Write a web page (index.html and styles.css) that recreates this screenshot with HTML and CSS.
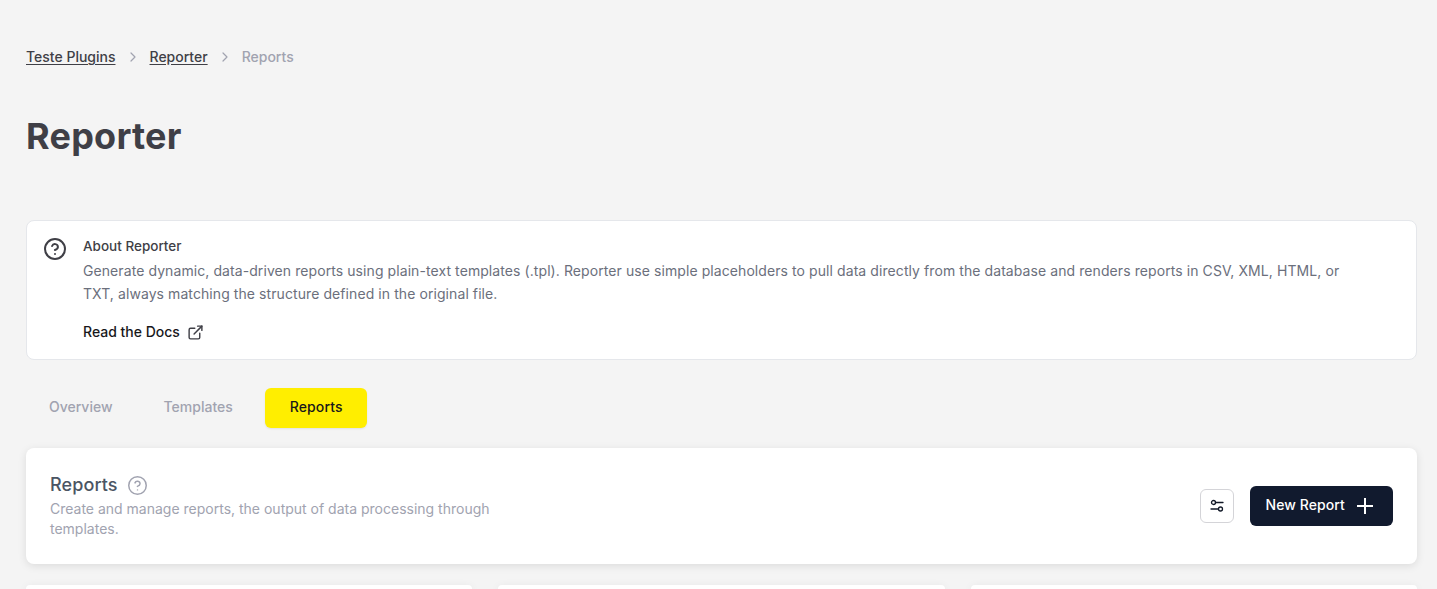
FILE: index.html
```html
<!DOCTYPE html>
<html lang="en">

<head>
  <meta charset="utf-8">
  <title>Reporter</title>
  <link rel="stylesheet" href="styles.css">
</head>

<body>
  <div class="page">
    <nav class="breadcrumb">
      <a href="#" class="crumb-link">Teste Plugins</a>
      <svg class="crumb-sep" viewBox="0 0 20 20" fill="none" stroke="currentColor" stroke-width="1.5" stroke-linecap="round" stroke-linejoin="round"><path d="M7.5 5l5 5-5 5"/></svg>
      <a href="#" class="crumb-link">Reporter</a>
      <svg class="crumb-sep" viewBox="0 0 20 20" fill="none" stroke="currentColor" stroke-width="1.5" stroke-linecap="round" stroke-linejoin="round"><path d="M7.5 5l5 5-5 5"/></svg>
      <span class="crumb-current">Reports</span>
    </nav>

    <h1 class="page-title">Reporter</h1>

    <!-- about -->
    <section class="about">
      <svg class="about-icon" viewBox="0 0 24 24" fill="none" stroke="currentColor" stroke-width="2" stroke-linecap="round" stroke-linejoin="round"><circle cx="12" cy="12" r="10"/><path d="M9.1 9a3 3 0 0 1 5.8 1c0 2-3 3-3 3"/><path d="M12 17h.01"/></svg>
      <div class="about-body">
        <h2 class="about-title">About Reporter</h2>
        <p class="about-text">Generate dynamic, data-driven reports using plain-text templates (.tpl). Reporter use simple placeholders to pull data directly from the database and renders reports in CSV, XML, HTML, or TXT, always matching the structure defined in the original file.</p>
        <a href="#" class="about-link">Read the Docs
          <svg viewBox="0 0 24 24" fill="none" stroke="currentColor" stroke-width="2" stroke-linecap="round" stroke-linejoin="round"><path d="M18 13v6a2 2 0 0 1-2 2H5a2 2 0 0 1-2-2V8a2 2 0 0 1 2-2h6"/><path d="M15 3h6v6"/><path d="M10 14L21 3"/></svg>
        </a>
      </div>
    </section>

    <!-- tabs -->
    <div class="tabs">
      <a href="#" class="tab">Overview</a>
      <a href="#" class="tab">Templates</a>
      <a href="#" class="tab tab-active">Reports</a>
    </div>

    <section class="panel">
      <div class="panel-info">
        <h2 class="panel-title">Reports
          <svg viewBox="0 0 24 24" fill="none" stroke="currentColor" stroke-width="1.7" stroke-linecap="round" stroke-linejoin="round"><circle cx="12" cy="12" r="10"/><path d="M9.1 9a3 3 0 0 1 5.8 1c0 2-3 3-3 3"/><path d="M12 17h.01"/></svg>
        </h2>
        <p class="panel-text">Create and manage reports, the output of data processing through templates.</p>
      </div>
      <div class="panel-actions">
        <button class="btn-filter" type="button">
          <svg viewBox="0 0 16 16" fill="none" stroke="currentColor" stroke-width="1.3" stroke-linecap="round"><circle cx="4.5" cy="4.5" r="2"/><path d="M6.5 4.5H14"/><circle cx="11.5" cy="11" r="2"/><path d="M9.5 11H2"/></svg>
        </button>
        <button class="btn-primary" type="button"><span class="btn-label">New Report</span>
          <svg viewBox="0 0 16 16" fill="none" stroke="currentColor" stroke-width="2" stroke-linecap="butt"><path d="M8 0v16M0 8h16"/></svg>
        </button>
      </div>
    </section>

    <div class="cards">
      <div class="card"></div>
      <div class="card"></div>
      <div class="card"></div>
    </div>
  </div>
</body>

</html>
```

FILE: styles.css
```css
* {
  box-sizing: border-box;
}

html,
body {
  height: 589px;
  overflow: hidden;
}

body {
  margin: 0;
  background: #f4f4f4;
  color: #3f3f46;
  font: 14px/20px Inter, "Liberation Sans", sans-serif;
}

a {
  text-decoration: none;
}

.page {
  padding: 47px 20px 0 26px;
}

/* breadcrumb */

.breadcrumb {
  display: flex;
  align-items: center;
  gap: 9px;
  height: 20px;
  font-weight: 500;
}

.crumb-link {
  color: #3f3f46;
  text-decoration: underline;
  text-underline-offset: 2px;
}

.crumb-sep {
  width: 16px;
  height: 16px;
  color: #a1a3b0;
}

.crumb-current {
  color: #a1a3b0;
}

.page-title {
  margin: 47px 0 0;
  font-size: 36px;
  line-height: 44px;
  font-weight: 700;
  letter-spacing: .25px;
  color: #3f3f46;
}

/* about */

.about {
  display: flex;
  gap: 16px;
  margin-top: 62px;
  height: 140px;
  padding: 15px 60px 0 16px;
  background: #fff;
  border: 1px solid #e5e7eb;
  border-radius: 8px;
}

.about-icon {
  flex: none;
  width: 24px;
  height: 24px;
  margin-top: 1px;
  color: #3f3f46;
}

.about-body {
  flex: 1;
}

.about-title {
  margin: 0;
  font-size: 13.5px;
  line-height: 20px;
  font-weight: 500;
}

.about-text {
  margin: 3px 0 0;
  color: #6b6f7c;
  line-height: 23px;
  letter-spacing: .08px;
}

.about-link {
  display: inline-flex;
  align-items: center;
  gap: 7px;
  margin-top: 17px;
  color: #18181b;
  font-weight: 500;
}

.about-link svg {
  width: 17px;
  height: 17px;
  color: #3f3f46;
}

/* tabs */

.tabs {
  display: flex;
  gap: 5px;
  margin-top: 28px;
}

.tab {
  display: flex;
  align-items: center;
  height: 40px;
  padding: 0 23px 2px;
  color: #a1a3b0;
  font-weight: 500;
  border-radius: 6px;
}

.tab-active {
  margin-left: 4px;
  padding: 0 24px 2px 25px;
  background: #ffee00;
  color: #18181b;
  letter-spacing: .1px;
  box-shadow: 0 1px 2px rgba(0, 0, 0, .08);
}

/* panel */

.panel {
  display: flex;
  align-items: center;
  justify-content: space-between;
  height: 116px;
  margin-top: 20px;
  padding: 0 24px;
  background: #fff;
  border-radius: 8px;
  box-shadow: 0 2px 8px rgba(0, 0, 0, .1);
}

.panel-info {
  width: 460px;
}

.panel-title {
  display: flex;
  align-items: center;
  gap: 9px;
  margin: 0;
  font-size: 18px;
  line-height: 24px;
  font-weight: 500;
  letter-spacing: .1px;
  color: #4b5563;
}

.panel-title svg {
  width: 21px;
  height: 21px;
  color: #a1a3b0;
}

.panel-text {
  margin: 2px 0 0;
  color: #a1a3b0;
}

.panel-actions {
  display: flex;
  align-items: center;
  gap: 16px;
}

.btn-filter {
  display: flex;
  align-items: center;
  justify-content: center;
  width: 34px;
  height: 34px;
  padding: 0;
  background: #fff;
  border: 1px solid #d4d4d8;
  border-radius: 6px;
  color: #111827;
}

.btn-filter svg {
  width: 16px;
  height: 16px;
}

.btn-primary {
  display: flex;
  align-items: center;
  gap: 12px;
  height: 40px;
  padding: 0 20px 0 15px;
  background: #111a2e;
  border: 0;
  border-radius: 6px;
  color: #fff;
  font: 500 14px/20px Inter, "Liberation Sans", sans-serif;
  letter-spacing: .1px;
}

.btn-label {
  margin-bottom: 2px;
}

.btn-primary svg {
  width: 16px;
  height: 16px;
}

/* report cards, cut off by the fold */

.cards {
  display: grid;
  grid-template-columns: repeat(3, 1fr);
  gap: 26px;
  margin-top: 21px;
}

.card {
  height: 4px;
  background: #fff;
  border-radius: 8px 8px 0 0;
  box-shadow: 0 2px 8px rgba(0, 0, 0, .1);
}
```
